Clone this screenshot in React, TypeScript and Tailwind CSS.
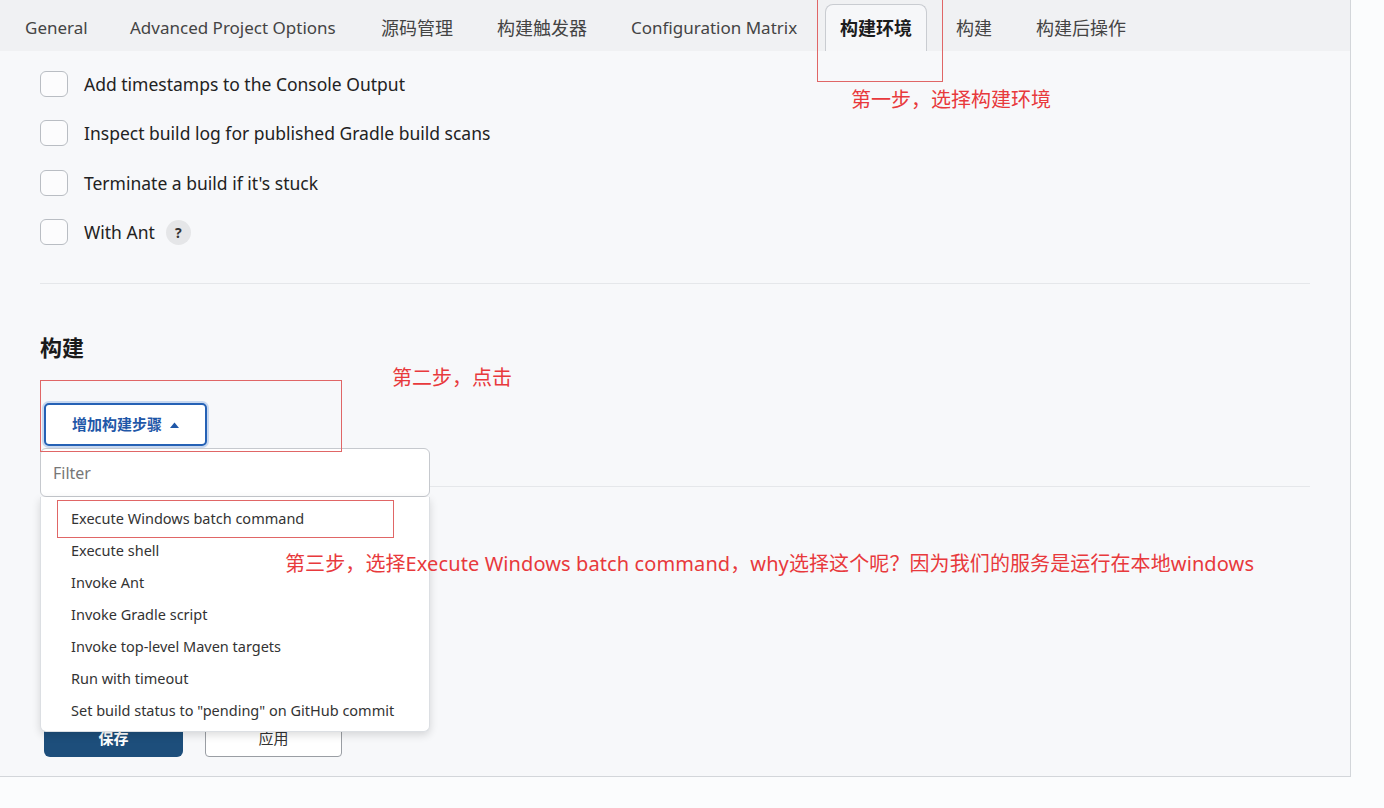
import React from "react";

const tabs = [
  { label: "General", w: "w-[105px]", cjk: false },
  { label: "Advanced Project Options", w: "w-[251px]", cjk: false },
  { label: "源码管理", w: "w-[116px]", cjk: true },
  { label: "构建触发器", w: "w-[134px]", cjk: true },
  { label: "Configuration Matrix", w: "w-[194px]", cjk: false },
];

const options = [
  "Add timestamps to the Console Output",
  "Inspect build log for published Gradle build scans",
  "Terminate a build if it's stuck",
];

const steps = [
  "Execute Windows batch command",
  "Execute shell",
  "Invoke Ant",
  "Invoke Gradle script",
  "Invoke top-level Maven targets",
  "Run with timeout",
  'Set build status to "pending" on GitHub commit',
];

const font = "font-['Noto_Sans','Noto_Sans_CJK_SC',sans-serif]";

function Checkbox() {
  return <span className="block w-[28px] h-[26px] rounded-[6px] border-[1.5px] border-[#b9bdc3] bg-white/60" />;
}

export default function App() {
  return (
    <div className={`relative w-[1384px] h-[808px] bg-[#fbfcfd] overflow-hidden ${font}`}>
      <div className="relative w-[1351px] h-[777px] bg-[#f7f8fa] border-r border-b border-[#d3d6da]">
        {/* Tab strip */}
        <div className="flex items-end h-[51px] bg-[#f0f1f3] pl-[25px] text-[17px] text-[#444]">
          {tabs.map((t) => (
            <div key={t.label} className={`${t.w} h-full flex items-center pt-[5px] ${t.cjk ? "text-[18px]" : ""}`}>
              {t.label}
            </div>
          ))}
          <div className="w-[102px] h-[47px] flex items-center justify-center pt-[1px] bg-[#f6f7f9] border border-b-0 border-[#c9ccd1] rounded-t-[8px] text-[18px] font-bold text-[#1c1c1c]">
            构建环境
          </div>
          <div className="w-[29px]" />
          <div className="w-[80px] h-full flex items-center pt-[5px] text-[18px]">构建</div>
          <div className="h-full flex items-center pt-[5px] text-[18px]">构建后操作</div>
        </div>

        <div className="px-[40px]">
          {/* Environment options */}
          <div className="pt-[8px]">
            {options.map((o) => (
              <div key={o} className="h-[49.5px] flex items-center gap-[16px] text-[17.5px] text-[#222]">
                <Checkbox />
                <span>{o}</span>
              </div>
            ))}
            <div className="h-[49.5px] flex items-center gap-[16px] text-[17.5px] text-[#222]">
              <Checkbox />
              <span>With Ant</span>
              <span className="-ml-[5px] w-[25px] h-[25px] rounded-full bg-[#e5e6e8] flex items-center justify-center text-[14px] font-bold text-[#333]">?</span>
            </div>
          </div>

          <div className="mt-[26px] w-[1270px] h-px bg-[#e5e7ea]" />

          {/* Build section */}
          <h2 className="mt-[48px] h-[30px] leading-[30px] text-[22px] font-bold text-[#1a1a1a]">构建</h2>
          <div className="mt-[41px] ml-[4px] w-[163px] h-[43px] rounded-[5px] border-2 border-[#2561b5] bg-white flex items-center justify-center gap-[8px] text-[15px] font-bold text-[#1f57a8] shadow-[0_0_0_2px_rgba(60,120,210,0.25)]">
            增加构建步骤
            <svg width="9" height="6" viewBox="0 0 9 6"><path d="M0 6 L4.5 0.5 L9 6 Z" fill="#1f57a8" /></svg>
          </div>
          <div className="mt-[40px] w-[1270px] h-px bg-[#e5e7ea]" />

          <div className="mt-[232px] ml-[4px] flex gap-[22px]">
            <div className="w-[139px] h-[38px] rounded-[6px] bg-[#1d4e7b] text-white text-[15px] font-bold flex items-center justify-center">保存</div>
            <div className="w-[137px] h-[38px] rounded-[4px] border border-[#9a9ea4] bg-white text-[15px] text-[#333] flex items-center justify-center">应用</div>
          </div>
        </div>

        {/* Opened step menu */}
        <div className="absolute left-[40px] top-[448px] w-[390px]">
          <div className="h-[49px] rounded-[6px] border border-[#c6c9ce] bg-white flex items-center pl-[12px] text-[16px] text-[#777]">
            Filter
          </div>
          <div className="h-[235px] rounded-b-[6px] border border-t-0 border-[#dcdfe3] bg-white shadow-[0_3px_8px_rgba(0,0,0,0.14)] pt-[6px]">
            {steps.map((s) => (
              <div key={s} className="h-[32px] flex items-center pl-[30px] text-[14.5px] text-[#333]">
                {s}
              </div>
            ))}
          </div>
        </div>

        {/* Red annotations */}
        <div className="absolute left-[817px] top-[-2px] w-[126px] h-[84px] border border-[#e06666]" />
        <div className="absolute left-[851px] top-[86px] text-[20px] leading-[28px] text-[#e8393c]">第一步，选择构建环境</div>
        <div className="absolute left-[40px] top-[380px] w-[302px] h-[72px] border border-[#e06666]" />
        <div className="absolute left-[392px] top-[364px] text-[20px] leading-[28px] text-[#e8393c]">第二步，点击</div>
        <div className="absolute left-[57px] top-[500px] w-[337px] h-[38px] border border-[#e06666]" />
        <div className="absolute left-[285px] top-[550px] text-[20px] leading-[28px] tracking-[0.1px] text-[#e8393c] whitespace-nowrap">
          第三步，选择Execute Windows batch command，why选择这个呢？因为我们的服务是运行在本地windows
        </div>
      </div>
    </div>
  );
}
